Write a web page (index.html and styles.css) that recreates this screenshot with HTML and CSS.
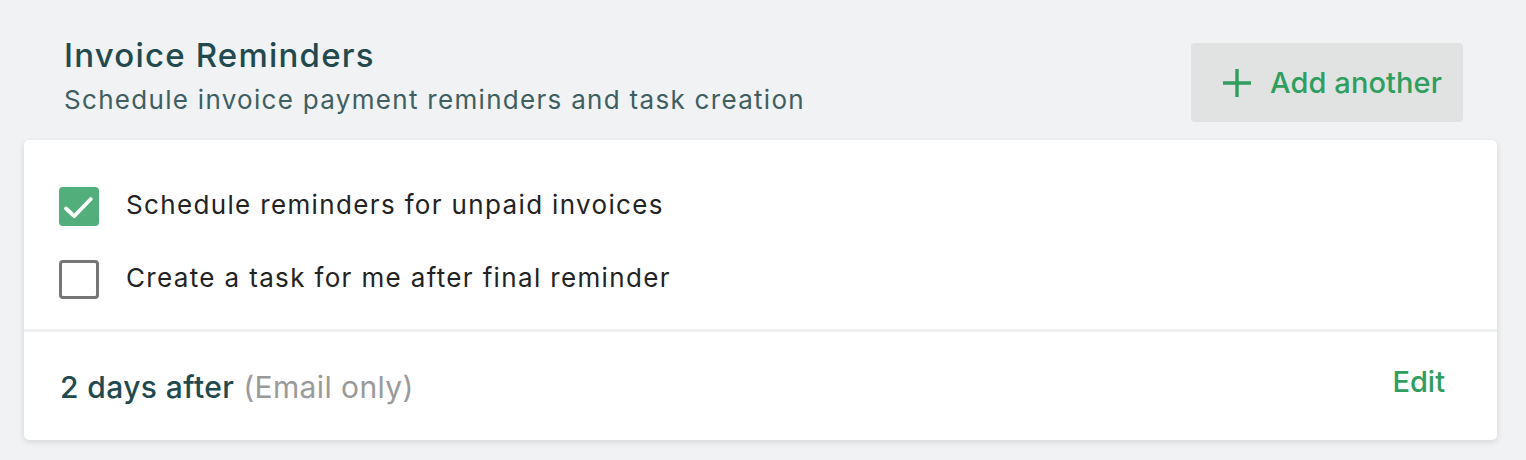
FILE: index.html
```html
<!DOCTYPE html>
<html>
<head>
<meta charset="utf-8">
<link rel="stylesheet" href="styles.css">
</head>
<body>
<div class="page">
  <div class="header">
    <div class="header-text">
      <h1 class="title">Invoice Reminders</h1>
      <p class="subtitle">Schedule invoice payment reminders and task creation</p>
    </div>
    <button class="add-btn">
      <svg class="plus" width="28" height="28" viewBox="0 0 28 28"><path d="M14 0V28M0 14H28" stroke="#2f9e5f" stroke-width="3.4" fill="none"/></svg>
      <span>Add another</span>
    </button>
  </div>
  <div class="card">
    <div class="options">
      <label class="option">
        <span class="box checked">
          <svg width="40" height="39" viewBox="0 0 40 39"><path d="M7 21.5L15.2 29.2L31.8 12" stroke="#fff" stroke-width="3.8" fill="none" stroke-linecap="round" stroke-linejoin="round"/></svg>
        </span>
        <span class="option-label">Schedule reminders for unpaid invoices</span>
      </label>
      <label class="option">
        <span class="box"></span>
        <span class="option-label">Create a task for me after final reminder</span>
      </label>
    </div>
    <div class="footer">
      <div class="schedule"><span class="when">2 days after</span> <span class="note">(Email only)</span></div>
      <a class="edit">Edit</a>
    </div>
  </div>
</div>
</body>
</html>
```

FILE: styles.css
```css
* { box-sizing: border-box; }
html, body { margin: 0; padding: 0; }
body {
  background: #f0f2f4;
  font-family: Inter, "Noto Sans", sans-serif;
  width: 1526px;
  height: 460px;
  overflow: hidden;
}
.page {
  padding: 0 29px 0 24px;
}
.header {
  display: flex;
  justify-content: space-between;
  align-items: flex-start;
  padding: 35px 34px 0 40px;
  height: 140px;
}
.title {
  margin: 0;
  font-size: 33px;
  font-weight: 500;
  color: #224a4e;
  line-height: 40px;
  letter-spacing: 1.2px;
}
.subtitle {
  margin: 10px 0 0;
  font-size: 26px;
  font-weight: 400;
  color: #3e5e61;
  line-height: 30px;
  letter-spacing: 1.3px;
}
.add-btn {
  margin-top: 8px;
  width: 272px;
  height: 79px;
  border: none;
  border-radius: 4px;
  background: #e1e3e3;
  display: flex;
  align-items: center;
  justify-content: flex-start;
  gap: 19px;
  padding: 0 0 0 32px;
  font-family: inherit;
  font-size: 29px;
  font-weight: 500;
  letter-spacing: 0.1px;
  color: #2f9e5f;
  cursor: pointer;
}
.plus { display: block; }
.card {
  background: #fff;
  border-radius: 5px;
  box-shadow: 0 2px 6px rgba(0,0,0,0.12);
  height: 300px;
  display: flex;
  flex-direction: column;
}
.options {
  padding: 46px 35px 0;
  display: flex;
  flex-direction: column;
  gap: 33px;
  height: 192px;
  border-bottom: 3px solid #eff0f0;
}
.option {
  display: flex;
  align-items: center;
  gap: 27px;
  height: 40px;
}
.box {
  width: 40px;
  height: 39px;
  border-radius: 4px;
  border: 3px solid #767676;
  display: flex;
  align-items: center;
  justify-content: center;
  flex: none;
}
.box svg { display: block; }
.box.checked {
  background: #52ae7a;
  border: none;
}
.option-label {
  font-size: 26px;
  color: #1f2324;
  letter-spacing: 1.35px;
  padding-bottom: 4px;
}
.footer {
  flex: 1;
  display: flex;
  align-items: center;
  justify-content: space-between;
  padding: 0 52px 0 36px;
}
.schedule {
  font-size: 30px;
  margin-top: 2px;
  letter-spacing: 0.4px;
}
.when { color: #224a4e; font-weight: 500; }
.note { color: #9a9a9a; }
.edit {
  font-size: 29px;
  font-weight: 500;
  color: #2f9e5f;
  margin-top: -9px;
}
```
